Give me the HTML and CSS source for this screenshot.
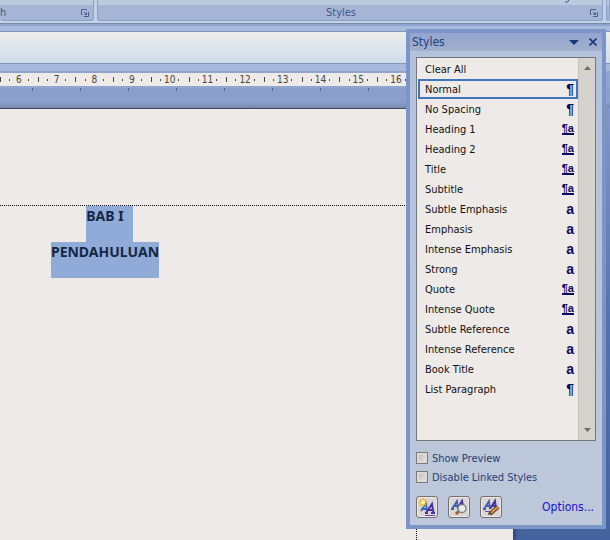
FILE: index.html
```html
<!DOCTYPE html>
<html lang="en">
<head>
<meta charset="UTF-8">
<meta name="viewport" content="width=device-width, initial-scale=1.0">
<title>Document - Styles</title>
<link rel="stylesheet" href="styles.css">
</head>
<body>
<header class="ribbon">
<div class="group group-paragraph">
<span>h</span>
<button class="launcher" aria-label="Paragraph settings"><svg width="8" height="8" viewBox="0 0 8 8"><path d="M.5 6V.5H6" fill="none" stroke="#49608f"/><path d="M7.5 3v4.500H3M3 3l3 3" fill="none" stroke="#49608f"/><path d="M6 3v3H3z" fill="#49608f"/></svg></button>
</div>
<div class="group group-styles">
<svg class="tail" width="6" height="3" viewBox="0 0 6 3"><path d="M5 0L3.500 2H1" fill="none" stroke="#3f5687"/></svg>
<span>Styles</span>
<button class="launcher" aria-label="Styles window"><svg width="8" height="8" viewBox="0 0 8 8"><path d="M.5 6V.5H6" fill="none" stroke="#49608f"/><path d="M7.500 3v4.500H3M3 3l3 3" fill="none" stroke="#49608f"/><path d="M6 3v3H3z" fill="#49608f"/></svg></button>
</div>
<div class="group group-editing"></div>
</header>
<div class="toolbar"></div>
<div class="ruler">
<div class="ruler-scale">
<span>6</span><span>7</span><span>8</span><span>9</span><span>10</span><span>11</span><span>12</span><span>13</span><span>14</span><span>15</span><span>16</span>
</div>
</div>
<div class="tab-stops"></div>
<main class="workspace">
<article class="page">
<div class="text-area">
<p><span class="selected mark">BAB I</span></p>
<p><span class="selected">PENDAHULUAN</span></p>
</div>
</article>
</main>

<aside class="pane">
<div class="pane-title">
<h2>Styles</h2>
<button aria-label="Pane options"><svg width="10" height="5" viewBox="0 0 10 5"><path d="M0 0h10L5 5z" fill="#173a7a"/></svg></button>
<button aria-label="Close"><svg width="8" height="8" viewBox="0 0 8 8"><path d="M.5.5l7 7M7.500.5l-7 7" stroke="#173a7a" stroke-width="1.600"/></svg></button>
</div>
<div class="pane-body">
<div class="list-box">
<ul class="styles">
<li>Clear All</li>
<li class="active">Normal <b>¶</b></li>
<li>No Spacing <b>¶</b></li>
<li>Heading 1 <b class="linked">¶a</b></li>
<li>Heading 2 <b class="linked">¶a</b></li>
<li>Title <b class="linked">¶a</b></li>
<li>Subtitle <b class="linked">¶a</b></li>
<li>Subtle Emphasis <b>a</b></li>
<li>Emphasis <b>a</b></li>
<li>Intense Emphasis <b>a</b></li>
<li>Strong <b>a</b></li>
<li>Quote <b class="linked">¶a</b></li>
<li>Intense Quote <b class="linked">¶a</b></li>
<li>Subtle Reference <b>a</b></li>
<li>Intense Reference <b>a</b></li>
<li>Book Title <b>a</b></li>
<li>List Paragraph <b>¶</b></li>
</ul>
<div class="scrollbar">
<svg width="7" height="4" viewBox="0 0 7 4"><path d="M0 4h7L3.500 0z" fill="#716b68"/></svg>
<svg width="7" height="4" viewBox="0 0 7 4"><path d="M0 0h7L3.500 4z" fill="#716b68"/></svg>
</div>
</div>
<div class="checks">
<label><input type="checkbox"> Show Preview</label>
<label><input type="checkbox"> Disable Linked Styles</label>
</div>
<div class="actions">
<button class="tool" aria-label="New Style">
<svg width="19" height="19" viewBox="0 0 19 19"><g fill="none"><path d="M3 13l5-8 1 8M5 11h4" stroke="#3b62b5" stroke-width="1.800"/><path d="M8 15l6-9 1.500 9M10 12h5M7 15h3M13 15h4" stroke="#4a369c" stroke-width="2"/><path d="M7 17.500h10" stroke="#6b4ab0"/><path d="M5 0v9M.5 4.500h9M2 1.500l6 6M8 1.500l-6 6" stroke="#e9b929" stroke-width="1.300"/></g><circle cx="5" cy="4.500" r="2" fill="#fff29a"/></svg>
</button>
<button class="tool" aria-label="Style Inspector">
<svg width="19" height="19" viewBox="0 0 19 19"><g fill="none"><path d="M2 11l5-8 1 8M4 8h4M1 11h3" stroke="#3b62b5" stroke-width="1.800"/><path d="M8 10l4-7 1 5M9 8h4" stroke="#4a369c" stroke-width="2"/><path d="M9 13l-3 3" stroke="#a85e28" stroke-width="3"/></g><circle cx="12" cy="10.500" r="4" fill="#e5e9ee" stroke="#777b85" stroke-width="1.300"/><path d="M10 10q1-2 3-2" fill="none" stroke="#fff"/></svg>
</button>
<button class="tool" aria-label="Manage Styles">
<svg width="19" height="19" viewBox="0 0 19 19"><g fill="none"><path d="M2 11l5-8 1 8M4 8h4M1 11h3" stroke="#3b62b5" stroke-width="1.800"/><path d="M8 11l5-8 1 8M9 8h5" stroke="#4a369c" stroke-width="2"/><path d="M3 13.500h7" stroke="#6b4ab0"/><path d="M8 16l8-7" stroke="#70401f" stroke-width="4"/><path d="M9 15l7-6" stroke="#d69a45" stroke-width="2"/></g><path d="M6 17l1-3 2 2z" fill="#333"/></svg>
</button>
<a href="#">Options...</a>
</div>
</div>
</aside>
</body>
</html>
```
FILE: styles.css
```css
* {
box-sizing: border-box;
}
body {
margin: 0;
height: 100vh;
display: flex;
flex-direction: column;
overflow: hidden;
position: relative;
background-color: #8fa4cf;
font-family: "DejaVu Sans Condensed", "Noto Sans", sans-serif;
font-size: 11px;
color: #111;
}
button {
padding: 0;
border: none;
background: none;
display: flex;
align-items: center;
justify-content: center;
}
.ribbon {
height: 24px;
display: flex;
gap: 3px;
padding-bottom: 2px;
background-color: #c3d2e6;
border-bottom: 1px solid #718daa;
}
.group {
display: flex;
align-items: center;
padding: 5px 4px 0 0;
color: #3c5788;
background: linear-gradient(#bdc9df 5px, #a6b5d6 5px);
border: 1px solid #8c9fc4;
border-top: none;
border-radius: 0 0 3px 3px;
}
.group span {
flex: 1;
text-align: center;
}
.group-paragraph {
width: 94px;
border-left: none;
}
.group-paragraph span {
text-align: left;
}
.group-styles {
flex: 1;
position: relative;
}
.group-styles span {
padding-right: 6px;
}
.group-styles .launcher,
.group-paragraph .launcher {
height: 8px;
}
.group-editing {
width: 4px;
padding: 0;
}
.tail {
position: absolute;
right: 32px;
top: 0;
}
.toolbar {
height: 45px;
margin-top: 2px;
background: linear-gradient(#eeeeec, #cfdcec);
border-top: 5px solid #a9b9dc;
border-bottom: 7px solid #a9b9dc;
box-shadow: inset 0 1px #8196bd, inset 0 -1px #8196bd;
}
.ruler {
height: 15px;
margin-top: 2px;
background-color: #8fa4cf;
}
.ruler-scale {
width: 68%;
height: 13px;
display: grid;
grid-template-columns: repeat(11, 1fr);
background-color: #edeae7;
font-size: 10px;
line-height: 13px;
color: #4b4643;
}
.ruler-scale span {
text-align: center;
background:
linear-gradient(#4b4643, #4b4643) 0 4px / 1px 5px no-repeat,
linear-gradient(#4b4643, #4b4643) 25% 6px / 1px 2px no-repeat,
linear-gradient(#4b4643, #4b4643) 75% 6px / 1px 2px no-repeat;
}
.tab-stops {
height: 20px;
background: repeating-linear-gradient(90deg, transparent 0 32px, #566489 32px 33px, transparent 33px 48px) 0 0 / 68% 3px no-repeat, linear-gradient(#8b9fcb 70%, #7588b1);
}
.workspace {
flex: 1;
overflow: hidden;
background: linear-gradient(#8297c7, #5572ae 50%, #45639f);
}
.page {
width: 816px;
height: 100%;
margin-left: -303px;
padding: 96px 96px 0 97px;
background-color: #edeae7;
border-top: 1px solid #46465a;
box-shadow: 2px 0 4px #2c406c;
}
.text-area {
height: 100%;
border-top: 1px dotted #111;
border-right: 1px dotted #111;
}
.text-area p {
margin: 0;
height: 36px;
text-align: center;
font: bold 14px/20px "Noto Sans", sans-serif;
}
.selected {
display: inline-block;
height: 36px;
color: #142744;
background-color: #91abd8;
}
.mark {
padding-right: 9px;
margin-right: -9px;
}
/* floating styles pane */
.pane {
position: absolute;
top: 29px;
right: 4px;
width: 200px;
border: 4px solid #7b95c9;
background: linear-gradient(#b3c2dc, #bdc8da);
color: #243f78;
}
.pane-title {
display: flex;
align-items: center;
gap: 10px;
height: 18px;
padding: 0 5px 0 2px;
background: linear-gradient(#93a6ce, #a2afcd);
}
.pane-title h2 {
flex: 1;
margin: 0;
font-size: 12px;
font-weight: normal;
}
.pane-body {
padding: 6px 6px 7px;
}
.list-box {
display: flex;
height: 384px;
border: 1px solid #74767c;
background-color: #edeae7;
}
.styles {
flex: 1;
list-style: none;
margin: 0;
padding: 1px 0 0 1px;
color: #111;
}
.styles li {
display: flex;
align-items: center;
justify-content: space-between;
height: 20px;
padding: 0 2px 0 5px;
border: 2px solid transparent;
}
.styles .active {
border-color: #3d76bd;
}
.styles b {
color: #0b0b63;
font: bold 14px/14px "Liberation Sans", sans-serif;
}
.styles .linked {
height: 12px;
font-size: 11px;
line-height: 10px;
border-bottom: 2px solid #0b0b63;
}
.scrollbar {
width: 17px;
display: flex;
flex-direction: column;
align-items: center;
justify-content: space-between;
padding: 8px 0;
background-color: #d6d2ce;
border-left: 1px solid #c8c4c0;
}
.checks {
display: grid;
gap: 5px;
margin-top: 10px;
}
.checks label {
display: flex;
align-items: center;
gap: 4px;
height: 14px;
}
.checks input {
appearance: none;
width: 12px;
height: 12px;
margin: 0;
border: 1px solid #7b7b7d;
background: linear-gradient(135deg, #b9b5b1, #edeae7);
box-shadow: inset 0 0 0 2px #dedbd7;
}
.actions {
display: flex;
align-items: center;
gap: 10px;
margin-top: 12px;
padding: 0 2px 0 0;
}
.tool {
width: 22px;
height: 22px;
border: 1px solid #76706c;
border-radius: 3px;
background-color: #d9d5d2;
box-shadow: inset 0 0 0 1px #edeae7;
}
.tool svg {
flex: none;
}
.actions a {
margin-left: auto;
color: #1a10d4;
font-size: 12px;
text-decoration: none;
}
```
